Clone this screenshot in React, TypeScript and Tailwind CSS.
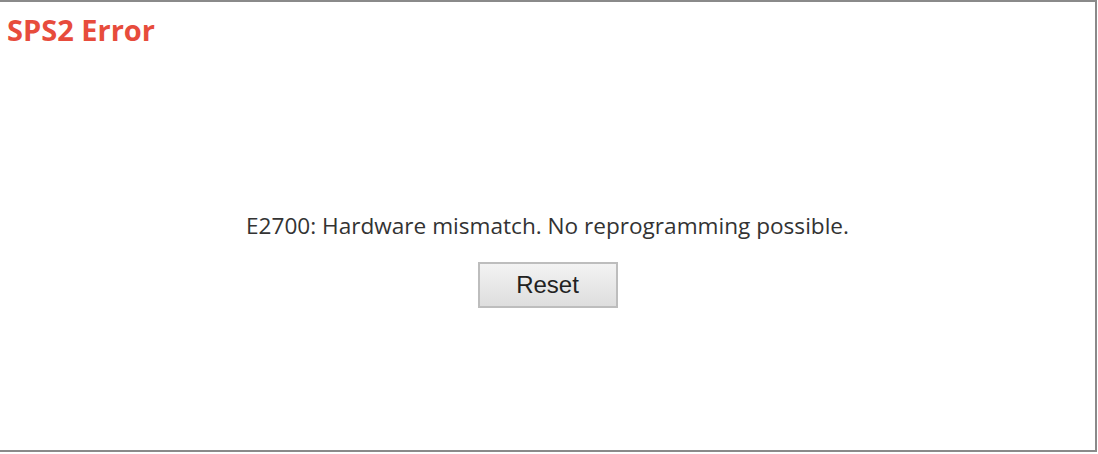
export default function App() {
  return (
    <div className="w-[1098px] h-[454px] bg-white">
      <div className="w-[1097px] h-[452px] border-t-2 border-r-2 border-b-2 border-[#8a8a8a] flex flex-col bg-white">
        <h1 className="pl-[7px] pt-[11px] text-[29px] leading-[34px] font-bold text-[#e74c3c]" style={{ fontFamily: '"Open Sans", "Noto Sans", sans-serif' }}>
          SPS2 Error
        </h1>
        <div className="flex flex-col items-center pt-[165px]">
          <p className="text-[22.6px] leading-[28px] text-[#333333]" style={{ fontFamily: '"Open Sans", "Noto Sans", sans-serif' }}>
            E2700: Hardware mismatch. No reprogramming possible.
          </p>
          <button className="mt-[22px] w-[140px] h-[46px] border-2 border-[#bdbdbd] bg-gradient-to-b from-[#f3f3f3] to-[#dedede] text-[24px] text-[#222222]" style={{ fontFamily: '"Liberation Sans", Arial, sans-serif' }}>
            Reset
          </button>
        </div>
      </div>
    </div>
  );
}
